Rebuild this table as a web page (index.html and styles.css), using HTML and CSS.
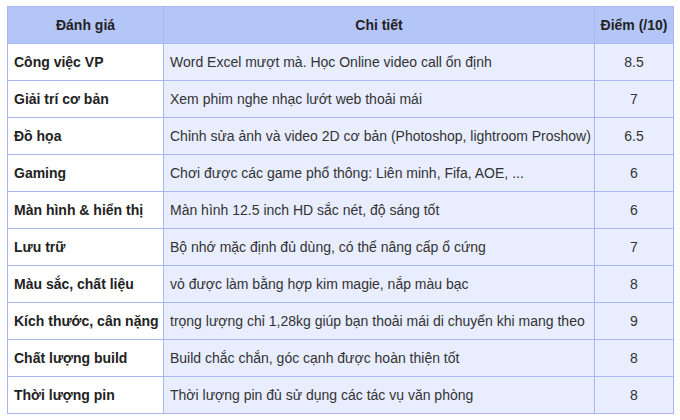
FILE: index.html
```html
<!DOCTYPE html>
<html lang="vi">
<head>
<meta charset="utf-8">
<link rel="stylesheet" href="styles.css">
</head>
<body>
<table class="spec">
  <colgroup>
    <col class="c1"><col class="c2"><col class="c3">
  </colgroup>
  <thead>
    <tr><th>Đánh giá</th><th>Chi tiết</th><th>Điểm (/10)</th></tr>
  </thead>
  <tbody>
    <tr><td class="k">Công việc VP</td><td>Word Excel mượt mà. Học Online video call ổn định</td><td class="n">8.5</td></tr>
    <tr><td class="k">Giải trí cơ bản</td><td>Xem phim nghe nhạc lướt web thoải mái</td><td class="n">7</td></tr>
    <tr><td class="k">Đồ họa</td><td>Chỉnh sửa ảnh và video 2D cơ bản (Photoshop, lightroom Proshow)</td><td class="n">6.5</td></tr>
    <tr><td class="k">Gaming</td><td>Chơi được các game phổ thông: Liên minh, Fifa, AOE, ...</td><td class="n">6</td></tr>
    <tr><td class="k">Màn hình &amp; hiển thị</td><td>Màn hình 12.5 inch HD sắc nét, độ sáng tốt</td><td class="n">6</td></tr>
    <tr><td class="k">Lưu trữ</td><td>Bộ nhớ mặc định đủ dùng, có thể nâng cấp ổ cứng</td><td class="n">7</td></tr>
    <tr><td class="k">Màu sắc, chất liệu</td><td>vỏ được làm bằng hợp kim magie, nắp màu bạc</td><td class="n">8</td></tr>
    <tr><td class="k">Kích thước, cân nặng</td><td>trọng lượng chỉ 1,28kg giúp bạn thoải mái di chuyển khi mang theo</td><td class="n">9</td></tr>
    <tr><td class="k">Chất lượng build</td><td>Build chắc chắn, góc cạnh được hoàn thiện tốt</td><td class="n">8</td></tr>
    <tr><td class="k">Thời lượng pin</td><td>Thời lượng pin đủ sử dụng các tác vụ văn phòng</td><td class="n">8</td></tr>
  </tbody>
</table>
</body>
</html>
```
FILE: styles.css
```css
html, body {
  margin: 0;
  padding: 0;
  background: #ffffff;
}
body {
  padding: 6px 0 0 7px;
  font-family: "Liberation Sans", Arial, sans-serif;
  font-size: 14px;
  color: #333333;
}
.spec {
  border-collapse: collapse;
  table-layout: fixed;
  width: 666px;
}
.c1 { width: 156px; }
.c2 { width: 431px; }
.c3 { width: 79px; }
.spec th, .spec td {
  border: 1px solid #a9b8f5;
  height: 36px;
  padding: 0 6px;
  vertical-align: middle;
  white-space: nowrap;
}
.spec th {
  background: #b4c5f8;
  color: #222222;
  font-weight: bold;
  text-align: center;
  padding: 0 3px;
}
.spec td {
  background: #e8edff;
}
.spec td.k {
  background: #ffffff;
  font-weight: bold;
  color: #222222;
}
.spec td.n {
  text-align: center;
}
```
